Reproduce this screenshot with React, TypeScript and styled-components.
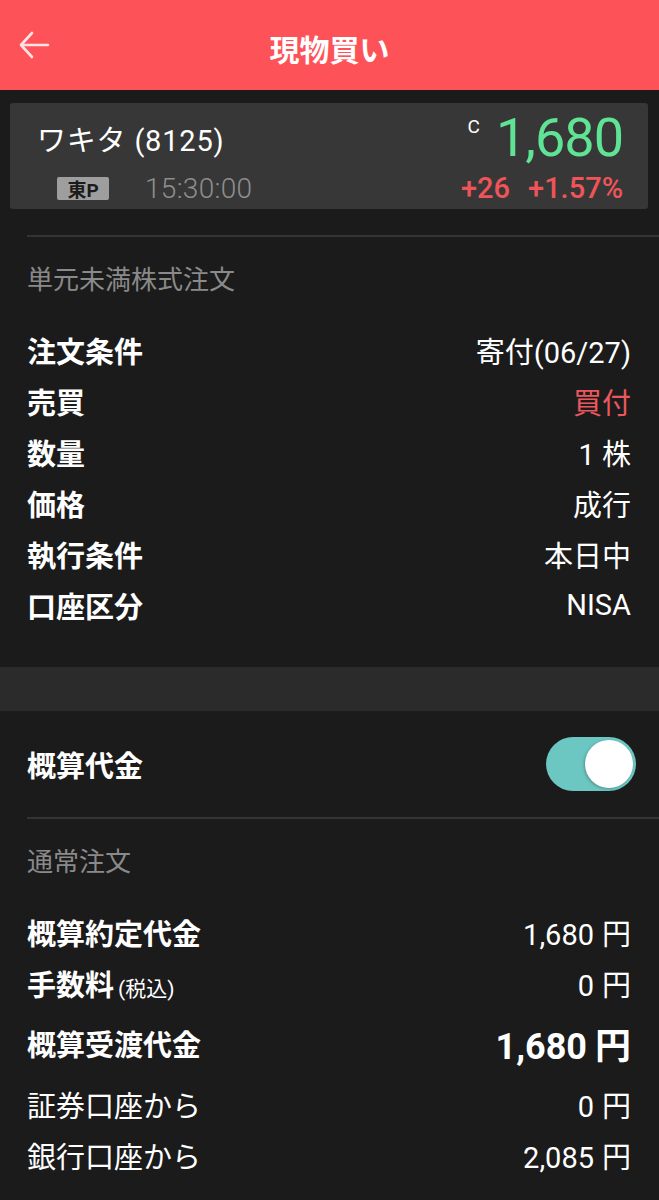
import styled, { createGlobalStyle } from "styled-components";

const GlobalStyle = createGlobalStyle`
  html, body {
    margin: 0;
    padding: 0;
    background: #1b1b1b;
  }
  body {
    font-family: Roboto, "Noto Sans CJK JP", sans-serif;
    color: #ffffff;
  }
`;

const Page = styled.div`
  width: 659px;
  min-height: 1200px;
  background: #1b1b1b;
`;

const Header = styled.header`
  display: grid;
  grid-template-columns: 80px 1fr 80px;
  align-items: center;
  height: 90px;
  background: #fd5258;
`;

const BackButton = styled.button`
  display: flex;
  align-items: center;
  justify-content: flex-start;
  padding: 0 0 0 18px;
  height: 100%;
  background: none;
  border: none;
`;

const Title = styled.h1`
  margin: 6px 0 0;
  text-align: center;
  font-size: 30px;
  font-weight: 700;
  color: #ffffff;
`;

const QuoteCard = styled.div`
  display: flex;
  flex-direction: column;
  gap: 6px;
  margin: 13px 11px 0 10px;
  padding: 8px 25px 9px 27px;
  height: 106px;
  box-sizing: border-box;
  background: #373737;
  border-radius: 3px;
`;

const QuoteRow = styled.div`
  display: flex;
  align-items: center;
  justify-content: space-between;
`;

const StockName = styled.div`
  font-size: 29px;
  letter-spacing: 0.8px;
`;

const PriceWrap = styled.div`
  display: flex;
  align-items: flex-start;
  gap: 16px;
`;

const CloseMark = styled.span`
  font-size: 19px;
  margin-top: 4px;
`;

const Price = styled.span`
  font-size: 54px;
  line-height: 54px;
  color: #5fe394;
  letter-spacing: -1px;
`;

const MarketInfo = styled.div`
  display: flex;
  align-items: center;
  gap: 36px;
  padding-left: 20px;
`;

const MarketBadge = styled.span`
  display: inline-flex;
  align-items: center;
  justify-content: center;
  width: 52px;
  height: 23px;
  background: #9e9e9e;
  border-radius: 2px;
  color: #1b1b1b;
  font-size: 19px;
  font-weight: 700;
`;

const Time = styled.span`
  font-size: 28px;
  font-weight: 300;
  color: #8e8e8e;
  letter-spacing: 0.3px;
`;

const Change = styled.div`
  display: flex;
  gap: 18px;
  font-size: 29px;
  font-weight: 500;
  color: #ef5459;
`;

const Section = styled.section<{ $top?: number; $bottom?: number }>`
  margin-top: ${(p) => p.$top ?? 0}px;
  padding-bottom: ${(p) => p.$bottom ?? 0}px;
`;

const Divider = styled.div`
  margin-left: 27px;
  border-top: 2px solid #343434;
`;

const SectionTitle = styled.div`
  padding: 23px 27px 0;
  height: 40px;
  line-height: 40px;
  font-size: 26px;
  color: #8a8a8a;
  margin-bottom: 24px;
`;

const Row = styled.div<{ $height?: number }>`
  display: flex;
  align-items: center;
  justify-content: space-between;
  height: ${(p) => p.$height ?? 51}px;
  padding: 0 28px 0 27px;
`;

const Label = styled.span<{ $bold?: boolean }>`
  font-size: 29px;
  font-weight: ${(p) => (p.$bold === false ? 400 : 700)};
  color: #ffffff;
`;

const Note = styled.span`
  font-size: 21px;
  font-weight: 400;
  margin-left: 4px;
`;

const Value = styled.span<{ $accent?: boolean; $large?: boolean }>`
  font-size: ${(p) => (p.$large ? 36 : 29)}px;
  font-weight: ${(p) => (p.$large ? 700 : 400)};
  color: ${(p) => (p.$accent ? "#ea585d" : "#ffffff")};
`;

const Yen = styled.span`
  margin-left: 8px;
`;

const Band = styled.div`
  height: 44px;
  background: #2b2b2b;
`;

const ToggleRow = styled.div`
  display: flex;
  align-items: center;
  justify-content: space-between;
  height: 106px;
  padding: 0 23px 0 27px;
`;

const Toggle = styled.button<{ $on: boolean }>`
  position: relative;
  width: 90px;
  height: 54px;
  padding: 0;
  border: none;
  border-radius: 27px;
  background: ${(p) => (p.$on ? "#6cc6c2" : "#666666")};
  &::after {
    content: "";
    position: absolute;
    top: 3px;
    left: ${(p) => (p.$on ? "39px" : "3px")};
    width: 48px;
    height: 48px;
    border-radius: 50%;
    background: #ffffff;
    box-shadow: -1px 1px 3px rgba(0, 0, 0, 0.25);
  }
`;

const orderRows = [
  { label: "注文条件", value: "寄付(06/27)" },
  { label: "売買", value: "買付", accent: true },
  { label: "数量", value: "1 株" },
  { label: "価格", value: "成行" },
  { label: "執行条件", value: "本日中" },
  { label: "口座区分", value: "NISA" },
];

const Amount = ({ value, large }: { value: string; large?: boolean }) => (
  <Value $large={large}>
    {value}
    <Yen>円</Yen>
  </Value>
);

const App = () => {
  return (
    <Page>
      <GlobalStyle />
      <Header>
        <BackButton aria-label="戻る">
          <svg width="32" height="28" viewBox="0 0 32 28" fill="none">
            <path
              d="M30 14H3M14 2L3 14L14 26"
              stroke="#ffe3e4"
              strokeWidth="2.6"
              strokeLinecap="round"
              strokeLinejoin="round"
            />
          </svg>
        </BackButton>
        <Title>現物買い</Title>
        <div />
      </Header>

      <QuoteCard>
        <QuoteRow>
          <StockName>ワキタ (8125)</StockName>
          <PriceWrap>
            <CloseMark>C</CloseMark>
            <Price>1,680</Price>
          </PriceWrap>
        </QuoteRow>
        <QuoteRow>
          <MarketInfo>
            <MarketBadge>東P</MarketBadge>
            <Time>15:30:00</Time>
          </MarketInfo>
          <Change>
            <span>+26</span>
            <span>+1.57%</span>
          </Change>
        </QuoteRow>
      </QuoteCard>

      <Section $top={26} $bottom={37}>
        <Divider />
        <SectionTitle>単元未満株式注文</SectionTitle>
        {orderRows.map((r) => (
          <Row key={r.label}>
            <Label>{r.label}</Label>
            <Value $accent={r.accent}>{r.value}</Value>
          </Row>
        ))}
      </Section>

      <Band />

      <Section>
        <ToggleRow>
          <Label>概算代金</Label>
          <Toggle $on aria-label="概算代金" />
        </ToggleRow>
        <Divider />
        <SectionTitle>通常注文</SectionTitle>
        <Row>
          <Label>概算約定代金</Label>
          <Amount value="1,680" />
        </Row>
        <Row>
          <Label>
            手数料<Note>(税込)</Note>
          </Label>
          <Amount value="0" />
        </Row>
        <Row $height={70}>
          <Label>概算受渡代金</Label>
          <Amount value="1,680" large />
        </Row>
        <Row>
          <Label $bold={false}>証券口座から</Label>
          <Amount value="0" />
        </Row>
        <Row>
          <Label $bold={false}>銀行口座から</Label>
          <Amount value="2,085" />
        </Row>
      </Section>
    </Page>
  );
};

export default App;
